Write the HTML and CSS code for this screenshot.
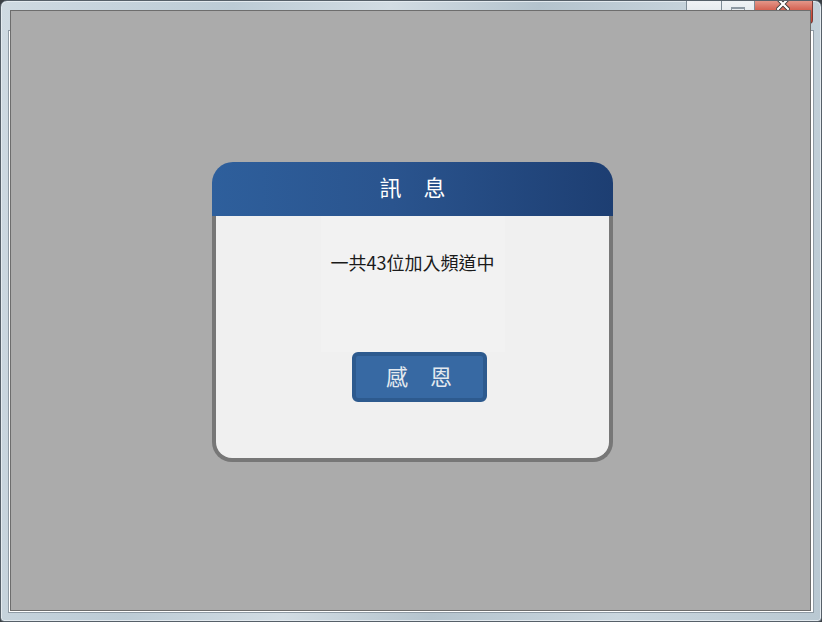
FILE: index.html
```html
<!DOCTYPE html>
<html lang="zh-Hant">
<head>
<meta charset="utf-8">
<title>訊息</title>
<link rel="stylesheet" href="styles.css">
</head>
<body>
<div class="window">
  <div class="titlebar">
    <div class="caption">
      <div class="cap-btn cap-min"></div>
      <div class="cap-btn cap-max"><span class="max-glyph"></span></div>
      <div class="cap-btn cap-close">
        <svg class="close-glyph" width="14" height="12" viewBox="0 0 14 12">
          <path d="M2 1 L12 11 M12 1 L2 11" stroke="#3a3a3a" stroke-width="4" stroke-linecap="square"/>
          <path d="M2 1 L12 11 M12 1 L2 11" stroke="#ffffff" stroke-width="2.2" stroke-linecap="square"/>
        </svg>
      </div>
    </div>
  </div>
  <div class="client">
    <div class="side-mark"></div>
  </div>
  <div class="overlay">
    <div class="dialog">
      <div class="dialog-head">訊　息</div>
      <div class="dialog-body">
        <div class="message">一共43位加入頻道中</div>
        <button class="ok-btn">感　恩</button>
      </div>
    </div>
  </div>
</div>
</body>
</html>
```
FILE: styles.css
```css
* { box-sizing: border-box; }
html, body { margin: 0; padding: 0; }
body {
  width: 822px;
  height: 622px;
  background: #3a3f44;
  overflow: hidden;
  font-family: "Noto Sans CJK TC", "Noto Sans", sans-serif;
}
.window {
  position: relative;
  width: 822px;
  height: 622px;
  border: 1px solid #566069;
  border-radius: 7px 7px 4px 4px;
  background: linear-gradient(100deg, #cfdae2 0%, #bccbd5 25%, #d2dce3 42%, #b4c3cd 58%, #cad6de 78%, #b9c8d2 100%);
  box-shadow: inset 0 0 0 1px #e3eaef;
  overflow: hidden;
}
.titlebar {
  height: 30px;
  display: flex;
  justify-content: flex-end;
}
.caption {
  display: flex;
  align-items: flex-start;
  margin-right: 8px;
  margin-top: -3px;
}
.cap-btn {
  height: 26px;
  border: 1px solid #7e8b96;
  border-top: none;
  position: relative;
}
.cap-min {
  width: 36px;
  background: linear-gradient(#f3f5f7, #dbe2e8);
  border-radius: 0 0 0 4px;
}
.cap-max {
  width: 33px;
  background: linear-gradient(#f3f5f7, #dbe2e8);
  border-left: none;
}
.max-glyph {
  position: absolute;
  left: 9px;
  top: 9px;
  width: 14px;
  height: 11px;
  border: 1px solid #8e99a3;
  border-top-width: 2px;
}
.cap-close {
  width: 58px;
  background: linear-gradient(#e9a89b, #d0503f 60%, #c63d2c);
  border-left: none;
  border-color: #7a3b35;
  border-radius: 0 0 4px 0;
}
.close-glyph {
  position: absolute;
  left: 21px;
  top: 0;
  display: block;
}
.client {
  position: absolute;
  left: 7px;
  top: 29px;
  right: 7px;
  bottom: 8px;
  background: #ffffff;
  border: 1px solid #8f9ba5;
}
.side-mark {
  position: absolute;
  left: 1px;
  top: 30px;
  width: 1px;
  height: 45px;
  background: #4a78b4;
}
.overlay {
  position: absolute;
  left: 9px;
  top: 9px;
  width: 801px;
  height: 601px;
  background: #ababab;
  border: 1px solid #6d6d6d;
  display: flex;
  align-items: center;
  justify-content: center;
  padding: 2px 0 0 4px;
}
.dialog {
  width: 401px;
  height: 300px;
  display: flex;
  flex-direction: column;
}
.dialog-head {
  height: 54px;
  flex: none;
  border-radius: 21px 21px 0 0;
  background: linear-gradient(90deg, #2e5f9c 0%, #2a548e 45%, #1d3e72 100%);
  color: #ffffff;
  font-size: 22px;
  line-height: 48px;
  text-align: center;
}
.dialog-body {
  flex: 1;
  background: #f0f0f0;
  border: 4px solid #777777;
  border-top: none;
  border-radius: 0 0 20px 20px;
  display: flex;
  flex-direction: column;
  align-items: center;
}
.message {
  width: 184px;
  height: 136px;
  background: #f2f2f2;
  padding-top: 34px;
  font-size: 18px;
  line-height: 24px;
  color: #1a1a1a;
  text-align: center;
  white-space: nowrap;
  display: flex;
  justify-content: center;
}
.ok-btn {
  width: 135px;
  height: 50px;
  border: 4px solid #2d5a8e;
  border-radius: 6px;
  background: #3769a3;
  color: #e4e9ef;
  font-family: "Noto Sans CJK TC", "Noto Sans", sans-serif;
  font-size: 22px;
  line-height: 1;
  padding: 0 0 4px 0;
  margin-left: 13px;
}
```
